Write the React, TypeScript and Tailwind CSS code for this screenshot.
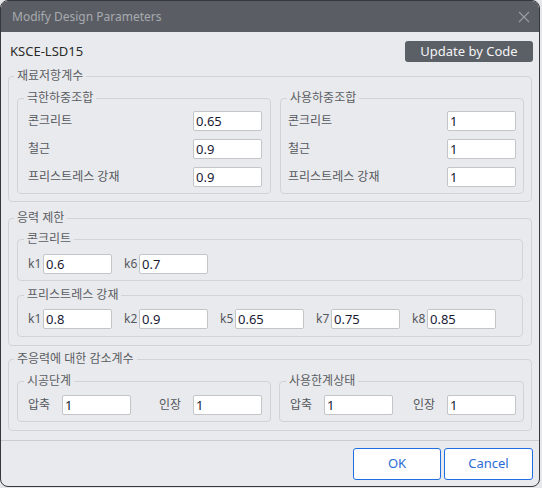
import React from "react";

const font = "font-['Noto_Sans','Noto_Sans_CJK_KR',sans-serif]";

function Field({ value, w = "w-[69px]" }: { value: string; w?: string }) {
  return (
    <input
      readOnly
      value={value}
      className={`h-[20px] ${w} rounded-[2px] border border-[#c3c5c9] bg-white px-[2px] text-[13px] leading-[18px] text-[#1a1a33] outline-none ${font}`}
    />
  );
}

function Group({
  title,
  legendMl,
  className = "",
  children,
}: {
  title: string;
  legendMl: string;
  className?: string;
  children: React.ReactNode;
}) {
  return (
    <fieldset className={`m-0 min-w-0 rounded-[4px] border border-[#d0d3d7] p-0 ${className}`}>
      <legend className={`${legendMl} px-[3px] text-[12px] leading-[14px] text-[#5a5d62]`}>{title}</legend>
      {children}
    </fieldset>
  );
}

function Row({ label, value }: { label: string; value: string }) {
  return (
    <div className="flex h-[20px] items-center justify-between">
      <span className="text-[12px] text-[#55585d]">{label}</span>
      <Field value={value} />
    </div>
  );
}

function KPair({ k, value }: { k: string; value: string }) {
  return (
    <div className="flex items-center">
      <span className="w-[15px] text-[12px] text-[#55585d]">{k}</span>
      <Field value={value} />
    </div>
  );
}

function Pair({ label, value }: { label: string; value: string }) {
  return (
    <div className="flex items-center">
      <span className="w-[34px] text-[12px] text-[#55585d]">{label}</span>
      <Field value={value} w="w-[69px]" />
    </div>
  );
}

export default function App() {
  return (
    <div className={`h-[488px] w-[542px] bg-[#e6e7ea] ${font}`}>
      <div className="flex h-[487px] w-[540px] flex-col overflow-hidden rounded-[8px] border border-[#34373c] bg-[#e9eaed]">
        {/* Title bar */}
        <div className="flex h-[31px] shrink-0 items-center justify-between bg-[#5a5e64] pl-[11px] pr-[9px]">
          <span className="text-[12px] text-[#a7aaaf]">Modify Design Parameters</span>
          <svg width="12" height="12" viewBox="0 0 12 12">
            <path d="M1 1 L11 11 M11 1 L1 11" stroke="#9a9da2" strokeWidth="1.1" fill="none" />
          </svg>
        </div>

        {/* Body */}
        <div className="flex flex-col px-[7px] pt-[9px]">
          <div className="flex h-[21px] items-center justify-between">
            <span className="pl-[2px] text-[13px] text-[#2a2a2a]">KSCE-LSD15</span>
            <button className="mr-[-1px] h-[21px] w-[128px] rounded-[3px] bg-[#5b5f66] text-[13px] text-[#f4f4f5]">
              Update by Code
            </button>
          </div>

          {/* 재료저항계수 */}
          <Group title="재료저항계수" legendMl="ml-[5px]" className="mt-[7px]">
            <div className="grid grid-cols-[254px_244px] gap-x-[9px] px-[8px] pb-[7px] pt-[8px]">
              <Group title="극한하중조합" legendMl="ml-[6px]">
                <div className="flex flex-col gap-[8px] pb-[6px] pl-[10px] pr-[8px] pt-[6px]">
                  <Row label="콘크리트" value="0.65" />
                  <Row label="철근" value="0.9" />
                  <Row label="프리스트레스 강재" value="0.9" />
                </div>
              </Group>
              <Group title="사용하중조합" legendMl="ml-[6px]">
                <div className="flex flex-col gap-[8px] pb-[6px] pl-[7px] pr-[7px] pt-[6px]">
                  <Row label="콘크리트" value="1" />
                  <Row label="철근" value="1" />
                  <Row label="프리스트레스 강재" value="1" />
                </div>
              </Group>
            </div>
          </Group>

          {/* 응력 제한 */}
          <Group title="응력 제한" legendMl="ml-[5px]" className="mt-[9px]">
            <div className="flex flex-col px-[8px] pb-[8px] pt-[7px]">
              <Group title="콘크리트" legendMl="ml-[6px]">
                <div className="flex gap-[12px] pb-[6px] pl-[10px] pt-[8px]">
                  <KPair k="k1" value="0.6" />
                  <KPair k="k6" value="0.7" />
                </div>
              </Group>
              <Group title="프리스트레스 강재" legendMl="ml-[6px]" className="mt-[7px]">
                <div className="flex gap-[12px] pb-[7px] pl-[10px] pt-[7px]">
                  <KPair k="k1" value="0.8" />
                  <KPair k="k2" value="0.9" />
                  <KPair k="k5" value="0.65" />
                  <KPair k="k7" value="0.75" />
                  <KPair k="k8" value="0.85" />
                </div>
              </Group>
            </div>
          </Group>

          {/* 주응력에 대한 감소계수 */}
          <Group title="주응력에 대한 감소계수" legendMl="ml-[5px]" className="mt-[6px]">
            <div className="grid grid-cols-[254px_245px] gap-x-[8px] px-[8px] pb-[8px] pt-[8px]">
              <Group title="시공단계" legendMl="ml-[6px]">
                <div className="flex justify-between pb-[6px] pl-[10px] pr-[8px] pt-[7px]">
                  <Pair label="압축" value="1" />
                  <Pair label="인장" value="1" />
                </div>
              </Group>
              <Group title="사용한계상태" legendMl="ml-[6px]">
                <div className="flex justify-between pb-[6px] pl-[10px] pr-[7px] pt-[7px]">
                  <Pair label="압축" value="1" />
                  <Pair label="인장" value="1" />
                </div>
              </Group>
            </div>
          </Group>
        </div>

        {/* Footer */}
        <div className="mt-[9px] flex justify-end gap-[3px] border-t border-[#c9ccd0] pr-[6px] pt-[7px]">
          <button className="h-[32px] w-[88px] rounded-[3px] border border-[#1f6fe0] bg-white text-[13px] text-[#2a6cd4]">
            OK
          </button>
          <button className="h-[32px] w-[89px] rounded-[3px] border border-[#1f6fe0] bg-white text-[13px] text-[#2a6cd4]">
            Cancel
          </button>
        </div>
      </div>
    </div>
  );
}
